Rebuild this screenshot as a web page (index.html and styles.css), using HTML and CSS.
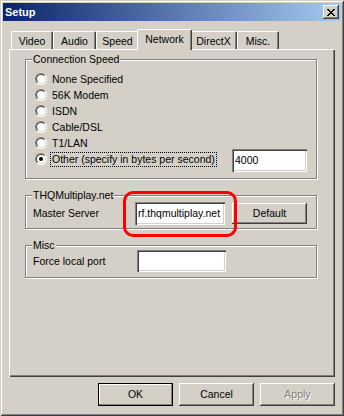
FILE: index.html
```html
<!DOCTYPE html>
<html>
<head>
<meta charset="utf-8">
<title>Setup</title>
<link rel="stylesheet" href="styles.css">
</head>
<body>
<div class="window">
  <div class="titlebar">
    <span class="title">Setup</span>
    <button class="close" aria-label="Close">
      <svg width="8" height="7" viewBox="0 0 8 7" shape-rendering="crispEdges"><path fill="#000" d="M0 0h2v1H0zM6 0h2v1H6zM1 1h2v1H1zM5 1h2v1H5zM2 2h4v1H2zM3 3h2v1H3zM2 4h4v1H2zM1 5h2v1H1zM5 5h2v1H5zM0 6h2v1H0zM6 6h2v1H6z"/></svg>
    </button>
  </div>
  <div class="client">
    <div class="tabs">
      <div class="tab t-video">Video</div>
      <div class="tab t-audio">Audio</div>
      <div class="tab t-speed">Speed</div>
      <div class="tab active t-network">Network</div>
      <div class="tab t-directx">DirectX</div>
      <div class="tab t-misc">Misc.</div>
    </div>
    <div class="panel">
      <fieldset class="group g-speed">
        <legend>Connection Speed</legend>
        <div class="group-body speed-body">
          <div class="radio-row"><span class="radio"></span><span class="rlabel">None Specified</span></div>
          <div class="radio-row"><span class="radio"></span><span class="rlabel">56K Modem</span></div>
          <div class="radio-row"><span class="radio"></span><span class="rlabel">ISDN</span></div>
          <div class="radio-row"><span class="radio"></span><span class="rlabel">Cable/DSL</span></div>
          <div class="radio-row"><span class="radio"></span><span class="rlabel">T1/LAN</span></div>
          <div class="radio-row"><span class="radio checked"></span><span class="rlabel focus">Other (specify in bytes per second)</span><span class="edit e-bytes">4000</span></div>
        </div>
      </fieldset>
      <fieldset class="group g-thq">
        <legend>THQMultiplay.net</legend>
        <div class="group-body field-row">
          <span class="field-label l-master">Master Server</span>
          <span class="edit e-master">rf.thqmultiplay.net</span>
          <button class="btn b-default">Default</button>
        </div>
      </fieldset>
      <fieldset class="group g-misc">
        <legend>Misc</legend>
        <div class="group-body field-row misc-row">
          <span class="field-label l-port">Force local port</span>
          <span class="edit e-port"></span>
        </div>
      </fieldset>
    </div>
    <div class="buttons">
      <button class="btn default">OK</button>
      <button class="btn">Cancel</button>
      <button class="btn disabled">Apply</button>
    </div>
  </div>
  <div class="highlight"></div>
</div>
</body>
</html>
```
FILE: styles.css
```css
body {
  margin: 0;
  background: #D4D0C8;
  font: 10.5px/13px "Liberation Sans", Arial, sans-serif;
  color: #000;
}

.window {
  position: relative;
  width: 344px;
  height: 416px;
  box-sizing: border-box;
  padding: 3px;
  background: #D4D0C8;
  box-shadow: inset 1px 1px #D4D0C8, inset -1px -1px #404040, inset 2px 2px #fff, inset -2px -2px #808080;
  display: flex;
  flex-direction: column;
}

.titlebar {
  height: 18px;
  display: flex;
  align-items: flex-start;
  background: linear-gradient(to right, #0A246A, #A6CAF0);
}

.title {
  flex: 1;
  color: #fff;
  font-size: 11px;
  font-weight: bold;
  line-height: 18px;
  padding-left: 2px;
}

.close {
  width: 16px;
  height: 14px;
  margin: 2px 2px 0 0;
  padding: 0;
  border: none;
  background: #D4D0C8;
  box-shadow: inset -1px -1px #404040, inset 1px 1px #fff, inset -2px -2px #808080;
  display: flex;
  align-items: center;
  justify-content: center;
}

.client {
  flex: 1;
  padding: 8px 6px 0 6px;
  display: flex;
  flex-direction: column;
}

.tabs {
  display: flex;
  align-items: flex-end;
  height: 20px;
  padding-left: 2px;
  position: relative;
  z-index: 1;
}

.tab {
  box-sizing: border-box;
  height: 18px;
  padding-top: 3px;
  text-align: center;
  border-top: 1px solid #fff;
  border-left: 1px solid #fff;
  border-right: 1px solid #404040;
  box-shadow: inset -1px 0 #808080;
  border-radius: 2px 2px 0 0;
  background: #D4D0C8;
}

.tab.active {
  position: relative;
  z-index: 2;
  height: 21px;
  margin: 0 -2px -1px;
  padding-top: 3px;
}

.t-video { width: 42px; }
.t-audio { width: 43px; }
.t-speed { width: 43px; }
.t-network { width: 55px; }
.t-directx { width: 47px; }
.t-misc { width: 42px; }

.panel {
  box-sizing: border-box;
  height: 328px;
  padding: 4px 18px 0 16px;
  box-shadow: inset 1px 1px #fff, inset -1px -1px #404040, inset -2px -2px #808080;
}

.group {
  margin: 0;
  padding: 0;
  min-width: 0;
  border: 1px solid #808080;
  box-shadow: inset 1px 1px #fff, 1px 1px #fff;
}

.group + .group {
  margin-top: 10px;
}

.group legend {
  margin-left: 6px;
  padding: 0 1px;
  line-height: 13px;
  background: #D4D0C8;
}

.speed-body {
  padding: 5px 9px 11px 9px;
}

.radio-row {
  display: flex;
  align-items: center;
  height: 16px;
}

.radio {
  flex: none;
  position: relative;
  width: 12px;
  height: 12px;
  box-sizing: border-box;
  border-radius: 50%;
  border: 1px solid;
  border-color: #808080 #fff #fff #808080;
  background: #fff;
}

.radio::before {
  content: "";
  position: absolute;
  inset: 0;
  border-radius: 50%;
  border: 1px solid;
  border-color: #404040 #D4D0C8 #D4D0C8 #404040;
}

.radio.checked::after {
  content: "";
  position: absolute;
  left: 3px;
  top: 3px;
  width: 4px;
  height: 4px;
  border-radius: 50%;
  background: #000;
}

.rlabel {
  margin-left: 3px;
  padding: 0 1px;
  border: 1px solid transparent;
  white-space: nowrap;
}

.rlabel.focus {
  border: 1px dotted #000;
}

.edit {
  box-sizing: border-box;
  display: flex;
  align-items: center;
  height: 23px;
  padding: 0 3px;
  background: #fff;
  box-shadow: inset 1px 1px #808080, inset 2px 2px #404040, inset -1px -1px #fff, inset -2px -2px #D4D0C8;
  overflow: hidden;
  white-space: nowrap;
}

.e-bytes {
  width: 75px;
  margin: -2px 0 -5px auto;
}

.field-row {
  display: flex;
  align-items: center;
  padding: 0 9px 3px 7px;
}

.misc-row {
  margin-top: -2px;
  padding-bottom: 5px;
}

.l-master { width: 102px; }
.l-port { width: 104px; }

.e-master { width: 90px; }
.e-port { width: 89px; height: 22px; }

.btn {
  box-sizing: border-box;
  width: 75px;
  height: 23px;
  padding: 0;
  border: none;
  font: inherit;
  color: #000;
  background: #D4D0C8;
  box-shadow: inset -1px -1px #404040, inset 1px 1px #fff, inset -2px -2px #808080;
}

.b-default {
  margin-left: 7px;
  height: 21px;
}

.btn.default {
  box-shadow: inset 0 0 0 1px #000, inset -2px -2px #808080, inset 2px 2px #fff;
}

.btn.disabled {
  color: #808080;
  text-shadow: 1px 1px #fff;
}

.buttons {
  display: flex;
  justify-content: flex-end;
  gap: 6px;
  margin-top: 6px;
}

.highlight {
  position: absolute;
  left: 123px;
  top: 191px;
  width: 114px;
  height: 46px;
  box-sizing: border-box;
  border: 3px solid #f00;
  border-radius: 10px;
}
```
